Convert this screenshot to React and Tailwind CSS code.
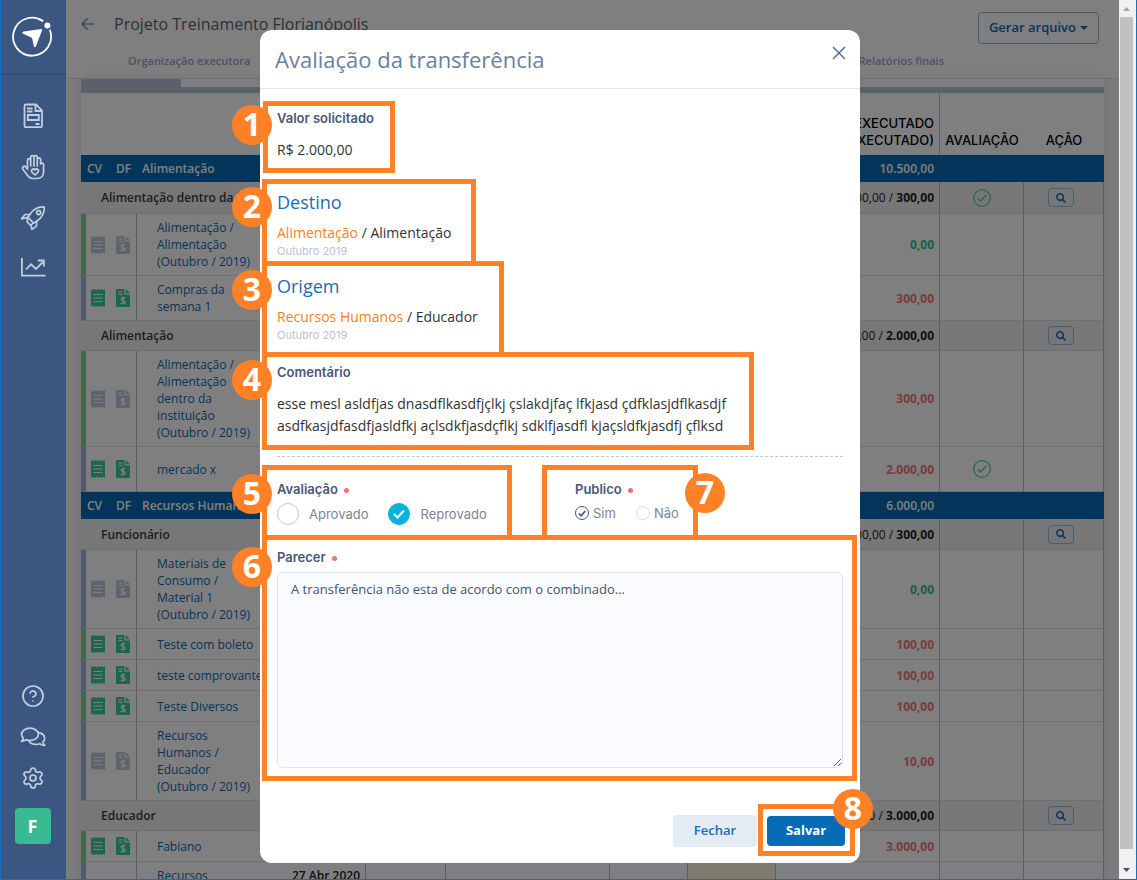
import React from "react";
import { FaSearch } from "react-icons/fa";
import { Settings, CircleHelp } from "lucide-react";

const AMOUNT_COLORS = {
  red: "text-[#f07878]",
  green: "text-[#38bb93]",
};

const ROWS = [
  { type: "category", name: "Alimentação", amount: "10.500,00" },
  { type: "group", name: "Alimentação dentro da instituição", total: "1.000,00", amount: "300,00", checked: true, height: "h-8" },
  { type: "item", name: "Alimentação /\nAlimentação\n(Outubro / 2019)", amount: "0,00", tone: "green", stripe: "green" },
  { type: "item", name: "Compras da\nsemana 1", amount: "300,00", tone: "red", stripe: "blue", attached: true },
  { type: "group", name: "Alimentação", total: "2.500,00", amount: "2.000,00", height: "h-[30px]" },
  { type: "item", name: "Alimentação /\nAlimentação\ndentro da\ninstituição\n(Outubro / 2019)", amount: "300,00", tone: "red", stripe: "green" },
  { type: "item", name: "mercado x", amount: "2.000,00", tone: "red", stripe: "blue", attached: true, checked: true, height: "h-[45px]" },
  { type: "category", name: "Recursos Humanos", amount: "6.000,00" },
  { type: "group", name: "Funcionário", total: "1.000,00", amount: "300,00", height: "h-[31px]" },
  { type: "item", name: "Materiais de\nConsumo /\nMaterial 1\n(Outubro / 2019)", amount: "0,00", tone: "green", stripe: "blue" },
  { type: "item", name: "Teste com boleto", amount: "100,00", tone: "red", stripe: "green", attached: true, height: "h-[31px]" },
  { type: "item", name: "teste comprovante", amount: "100,00", tone: "red", stripe: "blue", attached: true, height: "h-[31px]" },
  { type: "item", name: "Teste Diversos", amount: "100,00", tone: "red", stripe: "green", attached: true, height: "h-[31px]" },
  { type: "item", name: "Recursos\nHumanos /\nEducador\n(Outubro / 2019)", amount: "10,00", tone: "red", stripe: "blue" },
  { type: "group", name: "Educador", total: "3.000", amount: "3.000,00", height: "h-[30px]" },
  { type: "item", name: "Fabiano", amount: "3.000,00", tone: "red", stripe: "green", attached: true, height: "h-[31px]" },
  { type: "item", name: "Recursos\nHumanos /\nEducador\n(Outubro / 2019)", date: "27 Abr 2020", amount: "10,00", tone: "red", stripe: "blue" },
];

function LogoIcon() {
  return (
    <svg viewBox="0 0 42 42" className="size-[42px]" fill="none" aria-hidden="true">
      <path d="M32.2 5.3A19 19 0 1 0 38.8 13.8" stroke="#fff" strokeWidth="1.8" />
      <path d="M31.5 4.8A19 19 0 0 0 28 3.2" stroke="#fff" strokeWidth="1.8" />
      <circle cx="36.4" cy="9.6" r="3" fill="#fff" />
      <path d="M11.5 17.6Q11 16.2 12.6 15.6L30 13Q31.600 12.900 31 14.400L25 30.200Q24 32 22.900 30.400L21.200 22.600Q20.800 21.500 19.700 21.200Z" fill="#fff" />
    </svg>
  );
}

function ReportIcon() {
  return (
    <svg viewBox="0 0 24 26" className="h-[26px] w-6" fill="none" stroke="currentColor" strokeWidth="1.8" aria-hidden="true">
      <path d="M5 1.500h10l6 6v15.200a1.500 1.500 0 0 1-1.500 1.500H5a1.500 1.500 0 0 1-1.500-1.500V3A1.500 1.500 0 0 1 5 1.500z" />
      <path d="M14.500 2v6H21M6 5.500h5.500M6 8.500h5.500M14.500 21h4M6.800 12h11v5h-11z" />
    </svg>
  );
}

function HandHeartIcon() {
  return (
    <svg viewBox="0 0 24 26" className="h-[26px] w-6" fill="none" stroke="currentColor" strokeWidth="1.7" strokeLinejoin="round" strokeLinecap="round" aria-hidden="true">
      <path d="M6.500 15.500V6.200a1.600 1.600 0 0 1 3.200 0V12M9.700 11V3.200a1.600 1.600 0 0 1 3.300 0V12M13 11V3.200a1.600 1.600 0 0 1 3.300 0V12M16.300 11V5.600a1.600 1.600 0 0 1 3.300 0v0M19.600 5.600V10a1.600 1.600 0 0 1 3 .600v7.200c0 4-2.600 6.700-6.600 6.700h-4.200c-2.200 0-3.600-.8-4.800-2.400L1.900 15.300c-1.300-2 1.200-4.100 2.900-2.300l1.700 2" />
      <path d="M14 21l-3-2.900c-1.700-2 1.200-4.300 3-2.200 1.800-2.100 4.700.200 3 2.200z" />
    </svg>
  );
}

function RocketIcon() {
  return (
    <svg viewBox="0 0 26 26" className="size-[26px]" fill="none" stroke="currentColor" strokeWidth="1.700" strokeLinejoin="round" strokeLinecap="round" aria-hidden="true">
      <path d="M24.300 2C24.600 8 22.200 12.600 16.600 16.300L13.600 18.100 8 12.400 9.800 9.500C13.500 3.900 18.300 1.600 24.300 2z" />
      <path d="M9.800 9.500H5.800c-.8 0-1.200.3-1.600 1L1.500 13.800 8 12.400" />
      <path d="M16.600 16.300v4c0 .8-.3 1.200-1 1.600l-3.600 2.500-1-4.300" />
      <path d="M8 12.400l-1 4.500 3.500 3.200 3.100-2" />
      <circle cx="18.700" cy="7.600" r="2" />
    </svg>
  );
}

function TrendIcon() {
  return (
    <svg viewBox="0 0 26 22" className="h-[22px] w-[26px]" fill="none" stroke="currentColor" strokeWidth="1.800" aria-hidden="true">
      <path d="M1.900 2v17.600H25.500" />
      <path d="M6 13.500l5-5.200 5 4.600 6.800-6.800M17.800 4.500h6v6" />
    </svg>
  );
}

function ChatIcon() {
  return (
    <svg viewBox="0 0 26 22" className="h-[22px] w-[26px]" fill="none" stroke="currentColor" strokeWidth="1.700" strokeLinejoin="round" strokeLinecap="round" aria-hidden="true">
      <path d="M10 2.200c4.700 0 8.400 2.700 8.400 6.100S14.700 14.400 10 14.400c-1.400 0-2.700-.200-3.800-.7C5 14.700 3.300 15.300 1.500 15.300c.9-1 1.600-2.100 1.800-3.300C2.200 11 1.600 9.700 1.600 8.300c0-3.400 3.700-6.100 8.400-6.100z" />
      <path d="M18.500 6.700c3.500.6 6.100 2.900 6.100 5.700 0 1.400-.6 2.700-1.700 3.700.2 1.200.9 2.300 1.800 3.300-1.800 0-3.500-.6-4.700-1.600-1.100.4-2.400.7-3.800.7-3 0-5.600-1.200-7.100-3" />
    </svg>
  );
}

function ReceiptIcon() {
  return (
    <svg viewBox="0 0 14 18" className="h-[18px] w-3.5 shrink-0" aria-hidden="true">
      <path d="M0 0l1.700 1.200L3.500 0l1.700 1.200L7 0l1.800 1.200L10.500 0l1.800 1.200L14 0v18l-1.700-1.200L10.500 18l-1.700-1.200L7 18l-1.800-1.200L3.500 18l-1.800-1.200L0 18z" fill="currentColor" />
      <path d="M2.500 5.500h9M2.500 9h9M2.500 12.500h9" stroke="#fff" strokeWidth="1.100" />
    </svg>
  );
}

function InvoiceIcon() {
  return (
    <svg viewBox="0 0 14 18" className="h-[18px] w-3.5 shrink-0" fill="none" aria-hidden="true">
      <path d="M1 0h7.500v5.500H14V17a1 1 0 0 1-1 1H1a1 1 0 0 1-1-1V1a1 1 0 0 1 1-1z" fill="currentColor" />
      <path d="M9.700 0L14 4.300H9.700z" fill="currentColor" />
      <path d="M2.500 3h4M2.500 5.500h4" stroke="#fff" strokeWidth="1.100" />
      <path d="M9.200 9.300C8.500 8.300 5 8.200 5 10.100c0 2 4.300 1.200 4.300 3.200 0 1.900-3.700 1.700-4.500.5M7.100 7.400v8.200" stroke="#fff" strokeWidth="1.200" />
    </svg>
  );
}

function CircleCheckIcon() {
  return (
    <svg viewBox="0 0 18 18" className="mx-auto size-[18px] text-[#4cd0a0]" fill="none" stroke="currentColor" strokeWidth="1.200" aria-label="Avaliado">
      <circle cx="9" cy="9" r="8.300" />
      <path d="M4.800 9.400l2.700 2.700 5.700-6" strokeWidth="1.400" />
    </svg>
  );
}

function Sidebar() {
  return (
    <aside className="z-20 flex w-[65px] shrink-0 flex-col bg-[#3b5680] pr-0.5 text-[#c3cfe0]">
      <a href="#inicio" aria-label="Início" className="-mr-0.5 flex h-[75px] items-center justify-center border-b border-[#2c4775] pr-1">
        <LogoIcon />
      </a>
      <nav className="flex flex-col items-center gap-[25px] pt-7" aria-label="Principal">
        <a href="#relatorios" aria-label="Relatórios"><ReportIcon /></a>
        <a href="#doacoes" aria-label="Doações"><HandHeartIcon /></a>
        <a href="#projetos" aria-label="Projetos"><RocketIcon /></a>
        <a href="#indicadores" aria-label="Indicadores"><TrendIcon /></a>
      </nav>
      <div className="mt-auto flex flex-col items-center gap-[18px] pb-[35px]">
        <button type="button" aria-label="Ajuda"><CircleHelp className="size-6" strokeWidth={1.7} /></button>
        <button type="button" aria-label="Conversas"><ChatIcon /></button>
        <button type="button" aria-label="Configurações"><Settings className="size-6" strokeWidth={1.7} /></button>
        <button type="button" className="size-9 rounded bg-[#38bb93] text-lg font-bold leading-none text-white">F</button>
      </div>
    </aside>
  );
}

function PageHeader() {
  return (
    <header className="border-b border-[#e2e2e2]">
      <div className="flex h-12 items-start justify-between pl-[15px] pr-5">
        <div className="flex h-12 items-center gap-5">
          <a href="#voltar" aria-label="Voltar" className="text-[#5a86b8]">
            <svg viewBox="0 0 13 12" className="h-3 w-[13px]" fill="none" stroke="currentColor" strokeWidth="1.200">
              <path d="M13 6H1M6.500 .5L1 6l5.500 5.500" />
            </svg>
          </a>
          <h1 className="text-base text-[#5a6472]">Projeto Treinamento Florianópolis</h1>
        </div>
        <button type="button" className="mt-3 flex h-8 items-center gap-1 rounded border border-[#8abbe0] px-2.5 text-[13px] font-semibold text-[#076bb5]">
          Gerar arquivo
          <svg viewBox="0 0 8 4" className="h-1 w-2" fill="currentColor" aria-hidden="true"><path d="M0 0h8L4 4z" /></svg>
        </button>
      </div>
      <nav className="flex h-[30px] items-center justify-between pb-1 pl-[62px] pr-[175px] text-[11px] font-semibold text-[#94a5cc]">
        <a href="#organizacao">Organização executora</a>
        <a href="#finais">Relatórios finais</a>
      </nav>
    </header>
  );
}

function SearchButton() {
  return (
    <button type="button" aria-label="Visualizar" className="ml-6 flex h-[19px] w-[26px] items-center justify-center rounded border border-[#8abbe0] text-[#1f6cb0]">
      <FaSearch className="size-2.5" />
    </button>
  );
}

function Row({ row }) {
  if (row.type === "category") {
    return (
      <tr className="h-[27px] bg-[#076bb5] font-semibold text-white">
        <td className="pl-1.5">CV</td>
        <td className="pl-[7px]">DF</td>
        <td className="whitespace-nowrap pl-[5px]">{row.name}</td>
        <td colSpan="5" />
        <td className="pr-1.5 text-right">{row.amount}</td>
        <td colSpan="2" />
      </tr>
    );
  }
  if (row.type === "group") {
    return (
      <tr className={`bg-[#eeeeee] text-[#222] ${row.height} *:border-b *:border-b-[#dcdfea]`}>
        <td colSpan="8" className="pl-5 font-semibold text-[#3c3c3c]">{row.name}</td>
        <td className="border-r border-r-[#bbbbbb] pr-[5px] text-right">{row.total} / <b className="font-bold">{row.amount}</b></td>
        <td className="border-r border-r-[#bbbbbb]">{row.checked && <CircleCheckIcon />}</td>
        <td className="border-r border-r-[#bbbbbb]"><SearchButton /></td>
      </tr>
    );
  }
  const iconColor = row.attached ? "text-[#38cc9c]" : "text-[#bcc8dc]";
  const stripe = row.stripe === "green" ? "border-l-[#7fcf90]" : "border-l-[#a3b4da]";
  return (
    <tr className={`${row.height || ""} *:border-b *:border-b-[#dcdfea] *:py-[5px]`}>
      <td className={`border-l-[5px] pl-[5px] ${stripe} ${iconColor}`}><ReceiptIcon /></td>
      <td className={`border-r border-r-[#bbbbbb] pl-[7px] ${iconColor}`}><InvoiceIcon /></td>
      <td className="whitespace-pre pl-5 text-[#076bb5]"><a href="#item">{row.name}</a></td>
      <td className="border-r border-r-[#bbbbbb] pr-[5px] text-right align-top font-semibold text-[#222]">{row.date}</td>
      <td className="border-r border-r-[#bbbbbb]" />
      <td className="border-r border-r-[#bbbbbb]" />
      <td className="border-r border-r-[#bbbbbb]" />
      <td className="border-r border-r-[#bbbbbb] bg-[#fff8dc]" />
      <td className={`border-r border-r-[#bbbbbb] pr-[5px] text-right font-bold ${AMOUNT_COLORS[row.tone]}`}>{row.amount}</td>
      <td className="border-r border-r-[#bbbbbb]">{row.checked && <CircleCheckIcon />}</td>
      <td className="border-r border-r-[#bbbbbb]" />
    </tr>
  );
}

function BudgetTable() {
  return (
    <div className="bg-white shadow-[0_0_14px_rgba(0,0,0,0.08)]">
      <div className="h-2 w-[100px] bg-[#b7c2d4]" />
      <div className="h-1.5 bg-[#b7c2d4]" />
      <table className="w-full table-fixed border-separate border-spacing-0 text-xs leading-[17px]">
        <colgroup>
          <col className="w-7" /><col className="w-7" /><col className="w-[148px]" /><col className="w-[81px]" />
          <col className="w-20" /><col /><col className="w-[78px]" /><col className="w-[88px]" />
          <col className="w-[164px]" /><col className="w-[84px]" /><col className="w-20" />
        </colgroup>
        <thead>
          <tr className="h-[62px] font-[Inter,sans-serif] text-[13px] text-black *:pb-1.5 *:align-bottom *:font-medium">
            <td colSpan="8" />
            <th scope="col" className="border-r border-r-[#bbbbbb] pr-[5px] text-right">EXECUTADO<br />(EXECUTADO)</th>
            <th scope="col">AVALIAÇÃO</th>
            <th scope="col">AÇÃO</th>
          </tr>
        </thead>
        <tbody>{ROWS.map((row, i) => <Row key={i} row={row} />)}</tbody>
      </table>
    </div>
  );
}

const LABEL = "font-[Inter,sans-serif] text-[13px] font-semibold leading-4 text-[#4a5878]";

function Required() {
  return <span className="ml-1.5 inline-block size-[5px] rounded-full bg-[#f07070] align-middle" />;
}

function Location({ title, category, item, month }) {
  return (
    <section>
      <h3 className="text-lg leading-[22px] text-[#1a6cb4]">{title}</h3>
      <p className="mt-2.5 text-sm leading-5 text-[#333]"><span className="text-[#f58220]">{category}</span> / {item}</p>
      <p className="font-[Inter,sans-serif] text-[11px] leading-4 text-[#b8c2d8]">{month}</p>
    </section>
  );
}

function BigRadio({ name, label, checked }) {
  return (
    <label className="flex items-center gap-2.5">
      <span className="relative flex size-[22px] items-center justify-center">
        <input type="radio" name={name} defaultChecked={checked} className="peer absolute inset-0 size-full appearance-none rounded-full border border-[#ccc9c0] checked:border-[#07b3dc] checked:bg-[#07b3dc]" />
        <svg viewBox="0 0 12 10" className="relative hidden h-2.5 w-3 peer-checked:block" fill="none" stroke="#fff" strokeWidth="2"><path d="M1 5l3.500 3.500L11 1.500" /></svg>
      </span>
      {label}
    </label>
  );
}

function SmallRadio({ name, label, checked }) {
  return (
    <label className="flex items-center gap-1">
      <span className="relative flex size-3.5 items-center justify-center">
        <input type="radio" name={name} defaultChecked={checked} className="peer absolute inset-0 size-full appearance-none rounded-full border border-[#cfe3f2] checked:border-[#3b5680]" />
        <svg viewBox="0 0 8 7" className="relative hidden h-[7px] w-2 peer-checked:block" fill="none" stroke="#3b5680" strokeWidth="1.700"><path d="M.8 3.500l2.300 2.300L7.300 1" /></svg>
      </span>
      {label}
    </label>
  );
}

const HIGHLIGHTS = [
  "left-[3px] top-[71px] h-[72px] w-[132px]",
  "left-[2px] top-[149px] h-[87px] w-[214px]",
  "left-[2px] top-[231px] h-[96px] w-[242px]",
  "left-[2px] top-[322px] h-[98px] w-[492px]",
  "left-[2px] top-[435px] h-[75px] w-[250px]",
  "left-[282px] top-[435px] h-[75px] w-[156px]",
  "left-[2px] top-[505px] h-[246px] w-[595px]",
  "left-[498px] top-[774px] h-[52px] w-[97px]",
];

const MARKERS = [
  "left-[-28px] top-[75px]",
  "left-[-28px] top-[157px]",
  "left-[-28px] top-[240px]",
  "left-[-28px] top-[330px]",
  "left-[-28px] top-[444px]",
  "left-[-28px] top-[517px]",
  "left-[425px] top-[443px]",
  "left-[573px] top-[759px]",
];

/* Numbered call-outs laid over the dialog's fields. */
function Callouts() {
  return (
    <div className="pointer-events-none absolute inset-0">
      {HIGHLIGHTS.map((place) => <div key={place} className={`absolute border-[5px] border-[#ff8127] ${place}`} />)}
      {MARKERS.map((place, i) => (
        <span key={place} className={`absolute flex size-10 items-center justify-center rounded-full bg-[#ff8127] pb-0.5 text-[32px] font-bold leading-none text-white ${place}`}>{i + 1}</span>
      ))}
    </div>
  );
}

function TransferDialog() {
  return (
    <form role="dialog" aria-modal="true" aria-labelledby="dialog-title" onSubmit={(e) => e.preventDefault()} className="relative w-[600px] max-w-full self-start rounded-xl bg-white">
      <div className="flex h-[59px] items-start justify-between border-b border-[#e3e6e9] pl-[15px] pr-3.5 pt-3.5">
        <h2 id="dialog-title" className="text-[22px] leading-[30px] text-[#6b7fa0]">Avaliação da transferência</h2>
        <button type="button" aria-label="Fechar janela" className="mt-0.5 text-[#5f7698]">
          <svg viewBox="0 0 14 14" className="size-3.5" fill="none" stroke="currentColor" strokeWidth="1.600"><path d="M1 1l12 12M13 1L1 13" /></svg>
        </button>
      </div>
      <div className="px-[17px] pt-[21px]">
        <p className={LABEL}>Valor solicitado</p>
        <p className="mb-[31px] mt-3.5 text-sm leading-5 text-[#333]">R$ 2.000,00</p>
        <div className="flex flex-col gap-4">
          <Location title="Destino" category="Alimentação" item="Alimentação" month="Outubro 2019" />
          <Location title="Origem" category="Recursos Humanos" item="Educador" month="Outubro 2019" />
        </div>
        <p className={`mt-[21px] ${LABEL}`}>Comentário</p>
        <p className="mt-[13px] text-sm leading-[22px] text-[#333]">
          esse mesl asldfjas dnasdflkasdfjçlkj çslakdjfaç lfkjasd çdfklasjdflkasdjf<br />
          asdfkasjdfasdfjasldfkj açlsdkfjasdçflkj sdklfjasdfl kjaçsldfkjasdfj çflksd
        </p>
        <hr className="mt-[19px] border-t border-dashed border-[#b9c6da]" />
        <div className="mt-6 grid grid-cols-2 gap-[30px] font-[Inter,sans-serif] text-[13px] leading-4 text-[#7c8494]">
          <fieldset>
            <legend className={LABEL}>Avaliação<Required /></legend>
            <div className="mt-1.5 flex gap-5">
              <BigRadio name="avaliacao" label="Aprovado" />
              <BigRadio name="avaliacao" label="Reprovado" checked />
            </div>
          </fieldset>
          <fieldset>
            <legend className={LABEL}>Publico<Required /></legend>
            <div className="mt-2 flex gap-5">
              <SmallRadio name="publico" label="Sim" checked />
              <SmallRadio name="publico" label="Não" />
            </div>
          </fieldset>
        </div>
        <label htmlFor="parecer" className={`mt-6 block ${LABEL}`}>Parecer<Required /></label>
        <textarea id="parecer" defaultValue="A transferência não esta de acordo com o combinado..." className="mt-[7px] block h-[196px] w-full rounded-md border border-[#dbe4f3] bg-[#fafbff] px-[13px] py-[7px] text-[13px] leading-[18px] text-[#44546c]" />
      </div>
      <div className="flex items-center justify-end gap-2.5 px-[15px] pb-4 pt-[47px]">
        <button type="button" className="h-8 w-[84px] rounded bg-[#e3ebf3] text-[13px] font-semibold text-[#1a6cb4]">Fechar</button>
        <button type="submit" className="h-[30px] w-[78px] rounded bg-[#076bb5] text-[13px] font-bold text-white">Salvar</button>
      </div>
      <Callouts />
    </form>
  );
}

function Scrollbar() {
  return (
    <div className="flex w-[17px] shrink-0 flex-col items-center bg-[#f1f1f1] pr-0.5" aria-hidden="true">
      <svg viewBox="0 0 17 17" className="size-[17px]"><path d="M5 11h7L8.500 7z" fill="#a3a3a3" /></svg>
      <div className="w-[13px] flex-1 bg-[#c1c1c1]" />
      <svg viewBox="0 0 17 30" className="h-[30px] w-[17px]"><path d="M5 19h7l-3.500 4z" fill="#505050" /></svg>
    </div>
  );
}

export default function App() {
  return (
    <div className="flex h-screen overflow-hidden border-x border-b border-[#1570c0] font-['Open_Sans',sans-serif]">
      <div className="relative flex min-w-0 flex-1 overflow-hidden">
        <Sidebar />
        <main className="min-w-0 flex-1 bg-white">
          <PageHeader />
          <div className="bg-[#f8f8f8] px-[15px]">
            <BudgetTable />
          </div>
        </main>
        <div className="absolute inset-0 z-10 bg-black/50" />
        <div className="absolute inset-0 z-30 flex justify-center pt-[30px]">
          <TransferDialog />
        </div>
      </div>
      <Scrollbar />
    </div>
  );
}
